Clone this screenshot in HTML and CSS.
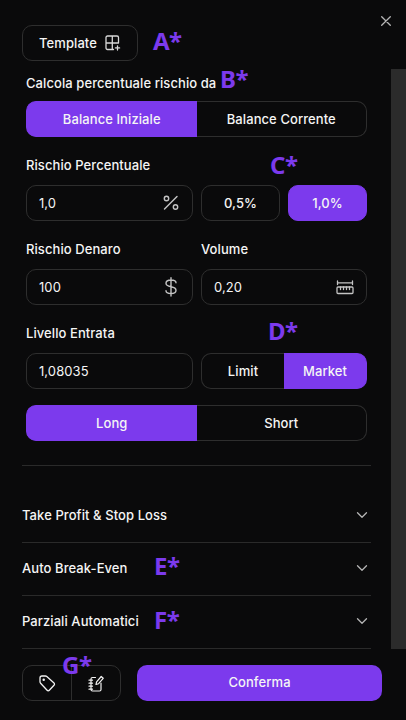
FILE: index.html
```html
<!DOCTYPE html>
<html lang="en">
<head>
  <meta charset="UTF-8" />
  <meta name="viewport" content="width=device-width, initial-scale=1.0"/>
  <title>Calcola rischio</title>

  <link rel="stylesheet" href="styles.css">
</head>
<body>

  <div class="panel">
    <!-- Close -->
    <button class="close-btn" type="button" aria-label="Chiudi">
      <svg width="10" height="10" viewBox="0 0 10 10" fill="none" stroke="#b5b5b5" stroke-width="1.300" stroke-linecap="round"><path d="M.7.7l8.600 8.600M9.300.7L.7 9.300"/></svg>
    </button>

    <!-- Template -->
    <div class="top">
      <button class="template-btn" type="button">
        Template
        <svg width="16" height="16" viewBox="0 0 16 16" fill="none" stroke="#d8d8d8" stroke-width="1.300" stroke-linecap="round" stroke-linejoin="round">
          <path d="M8.500 14.500H2.500A1.500 1.500 0 0 1 1 13V2.500A1.500 1.500 0 0 1 2.500 1h9.500A1.500 1.500 0 0 1 13.500 2.500v5.500H1M7.300 1v13.500"/>
          <path d="M12.500 10.800v4.200M10.400 12.900h4.200"/>
        </svg>
      </button>
    </div>

    <div class="middle">
      <div class="scroll">
        <form class="form">
          <label class="label label-tight">Calcola percentuale rischio da</label>
          <div class="segment">
            <button class="seg-item active" type="button">Balance Iniziale</button>
            <button class="seg-item" type="button">Balance Corrente</button>
          </div>

          <div class="form-row">
            <div>
              <label class="label">Rischio Percentuale</label>
              <div class="input-box">
                <span>1,0</span>
                <svg width="18" height="18" viewBox="0 0 18 18" fill="none" stroke="#c4c4c4" stroke-width="1.400" stroke-linecap="round"><path d="M15 2.500L2.500 15"/><circle cx="4.500" cy="4.500" r="2.200"/><circle cx="13.500" cy="13" r="2.200"/></svg>
              </div>
            </div>
            <div>
              <div class="label">&nbsp;</div>
              <div class="quick-btns">
                <button class="quick" type="button">0,5%</button>
                <button class="quick active" type="button">1,0%</button>
              </div>
            </div>
          </div>

          <div class="form-row">
            <div>
              <label class="label">Rischio Denaro</label>
              <div class="input-box">
                <span>100</span>
                <svg width="18" height="20" viewBox="0 0 18 20" fill="none" stroke="#c4c4c4" stroke-width="1.400" stroke-linecap="round" stroke-linejoin="round"><path d="M14 5.800C14 3.900 12.200 3 9 3S4 4 4 6.200 5.800 9.100 9 9.700s5 1.300 5 3.500-1.800 3.300-5 3.300-5-.8-5-2.700M9 .8v18.200"/></svg>
              </div>
            </div>
            <div>
              <label class="label">Volume</label>
              <div class="input-box">
                <span>0,20</span>
                <svg width="18" height="18" viewBox="0 0 18 18" fill="none" stroke="#c4c4c4" stroke-width="1.300" stroke-linecap="round" stroke-linejoin="round"><path d="M1.500 3v3.500M16.500 3v3.500M1.500 4.800h15"/><rect x="1" y="9" width="16" height="6.500" rx="1"/><path d="M4.500 9v2.500M7.500 9v2.500M10.500 9v2.500M13.500 9v2.500"/></svg>
              </div>
            </div>
          </div>

          <div class="form-row">
            <div>
              <label class="label">Livello Entrata</label>
              <div class="input-box">
                <span>1,08035</span>
              </div>
            </div>
            <div>
              <div class="label">&nbsp;</div>
              <div class="segment">
                <button class="seg-item" type="button">Limit</button>
                <button class="seg-item active" type="button">Market</button>
              </div>
            </div>
          </div>

          <div class="segment segment-side">
            <button class="seg-item active" type="button">Long</button>
            <button class="seg-item" type="button">Short</button>
          </div>
        </form>

        <!-- Accordions -->
        <div class="accordion">
          <div class="acc-row">
            <span>Take Profit &amp; Stop Loss</span>
            <svg width="12" height="12" viewBox="0 0 12 12" fill="none" stroke="#b5b5b5" stroke-width="1.300" stroke-linecap="round" stroke-linejoin="round"><path d="M1.500 3.800L6 8.200l4.500-4.400"/></svg>
          </div>
          <div class="acc-row">
            <span>Auto Break-Even</span>
            <svg width="12" height="12" viewBox="0 0 12 12" fill="none" stroke="#b5b5b5" stroke-width="1.300" stroke-linecap="round" stroke-linejoin="round"><path d="M1.500 3.800L6 8.200l4.500-4.400"/></svg>
          </div>
          <div class="acc-row">
            <span>Parziali Automatici</span>
            <svg width="12" height="12" viewBox="0 0 12 12" fill="none" stroke="#b5b5b5" stroke-width="1.300" stroke-linecap="round" stroke-linejoin="round"><path d="M1.500 3.800L6 8.200l4.500-4.400"/></svg>
          </div>
        </div>
      </div>
      <div class="scrollbar"></div>
    </div>

    <!-- Footer -->
    <div class="footer">
      <div class="icon-group">
        <button class="icon-btn" type="button" aria-label="Tag">
          <svg width="17" height="17" viewBox="0 0 17 17" fill="none" stroke="#f2f2f2" stroke-width="1.300" stroke-linecap="round" stroke-linejoin="round"><path d="M1 3A2 2 0 0 1 3 1h3.500a2 2 0 0 1 1.300.5l7.200 6.600a1.500 1.500 0 0 1 0 2.200l-4.700 5a1.500 1.500 0 0 1-2.200 0L1.600 8.200A2 2 0 0 1 1 6.800z"/><circle cx="4.700" cy="4.700" r=".6"/></svg>
        </button>
        <button class="icon-btn" type="button" aria-label="Note">
          <svg width="16" height="17" viewBox="0 0 16 17" fill="none" stroke="#f2f2f2" stroke-width="1.200" stroke-linecap="round" stroke-linejoin="round"><path d="M7.500 2.500H4.500A1.500 1.500 0 0 0 3 4v10.500A1.500 1.500 0 0 0 4.500 16h7a1.500 1.500 0 0 0 1.500-1.500V8M1 5.200h3.500M1 8.200h3.500M1 11.200h3.500M1 14.200h3.500"/><path d="M8 9.500l.6-2.600L13.200 1.500l2 1.800-4.600 5.400z"/></svg>
        </button>
      </div>
      <button class="confirm-btn" type="button">Conferma</button>
    </div>

    <!-- Annotation marks over the UI -->
    <span class="mark mark-a">A*</span>
    <span class="mark mark-b">B*</span>
    <span class="mark mark-c">C*</span>
    <span class="mark mark-d">D*</span>
    <span class="mark mark-e">E*</span>
    <span class="mark mark-f">F*</span>
    <span class="mark mark-g">G*</span>
  </div>

</body>
</html>
```

FILE: styles.css
```css
* {
  box-sizing: border-box;
}

body {
  margin: 0;
  background: #0a0a0b;
  color: #f5f5f5;
  font-family: "Inter", "Noto Sans", sans-serif;
  letter-spacing: 0.08px;
}

button {
  font: inherit;
  letter-spacing: inherit;
  color: inherit;
  background: none;
  border: none;
  padding: 0;
  cursor: pointer;
}

.panel {
  position: relative;
  width: 406px;
  height: 720px;
  display: flex;
  flex-direction: column;
  overflow: hidden;
}

.close-btn {
  position: absolute;
  top: 16px;
  right: 15px;
  width: 10px;
  height: 10px;
  display: flex;
}

.top {
  height: 69px;
  padding: 25px 0 0 22px;
}

.template-btn {
  width: 116px;
  height: 36px;
  display: flex;
  align-items: center;
  justify-content: center;
  gap: 8px;
  border: 1px solid #2e2e2e;
  border-radius: 10px;
  font-size: 13px;
  font-weight: 500;
}

.middle {
  height: 580px;
  display: flex;
}

.scroll {
  flex: 1;
  padding: 4px 20px 0 22px;
}

.scrollbar {
  width: 15px;
  background: #2b2b2b;
}

.form {
  padding: 0 4px;
  display: flex;
  flex-direction: column;
  width: 349px;
}

.label {
  display: block;
  height: 20px;
  line-height: 20px;
  margin-bottom: 10px;
  font-size: 13px;
  font-weight: 500;
}

.label-tight {
  margin-bottom: 8px;
}

.segment {
  height: 36px;
  display: flex;
}

.seg-item {
  flex: 1;
  padding-bottom: 1px;
  border: 1px solid #2e2e2e;
  font-size: 13px;
  font-weight: 500;
}

.seg-item:first-child {
  border-right: none;
  border-radius: 10px 0 0 10px;
}

.seg-item:last-child {
  border-left: none;
  border-radius: 0 10px 10px 0;
}

.seg-item.active {
  background: #7c3aed;
  border-color: #7c3aed;
}

.segment-side {
  margin-top: 16px;
}

.form-row {
  display: grid;
  grid-template-columns: 167px 166px;
  gap: 8px;
  margin-top: 18px;
}

.input-box {
  height: 36px;
  padding: 0 12px;
  display: flex;
  align-items: center;
  justify-content: space-between;
  border: 1px solid #2e2e2e;
  border-radius: 10px;
  font-size: 13px;
}

.quick-btns {
  display: grid;
  grid-template-columns: 1fr 1fr;
  gap: 8px;
}

.quick {
  height: 36px;
  padding-bottom: 1px;
  border: 1px solid #2e2e2e;
  border-radius: 10px;
  font-size: 13px;
  font-weight: 500;
}

.quick.active {
  background: #7c3aed;
  border-color: #7c3aed;
}

.accordion {
  margin-top: 24px;
  width: 349px;
  border-top: 1px solid #2a2a2a;
  padding-top: 24px;
}

.acc-row {
  height: 53px;
  display: flex;
  align-items: center;
  justify-content: space-between;
  padding: 0 3px 2px 0;
  border-bottom: 1px solid #2a2a2a;
  font-size: 13px;
  font-weight: 500;
}

.footer {
  padding: 16px 24px 0 22px;
  display: flex;
  gap: 16px;
}

.icon-group {
  width: 99px;
  height: 36px;
  display: flex;
  border: 1px solid #2e2e2e;
  border-radius: 10px;
}

.icon-btn {
  flex: 1;
  display: flex;
  align-items: center;
  justify-content: center;
}

.icon-btn + .icon-btn {
  border-left: 1px solid #2e2e2e;
}

.confirm-btn {
  flex: 1;
  height: 36px;
  padding-bottom: 2px;
  border-radius: 10px;
  background: #7c3aed;
  font-size: 13px;
  font-weight: 500;
}

.mark {
  position: absolute;
  color: #7c3aed;
  font-family: "Noto Sans", sans-serif;
  font-size: 24px;
  font-weight: 700;
  line-height: 30px;
  letter-spacing: -0.5px;
}

.mark-a { left: 153px; top: 26px; }
.mark-b { left: 220px; top: 64px; }
.mark-c { left: 270px; top: 150px; }
.mark-d { left: 268px; top: 316px; }
.mark-e { left: 154px; top: 551px; }
.mark-f { left: 154px; top: 605px; }
.mark-g { left: 62px; top: 650px; }
```
